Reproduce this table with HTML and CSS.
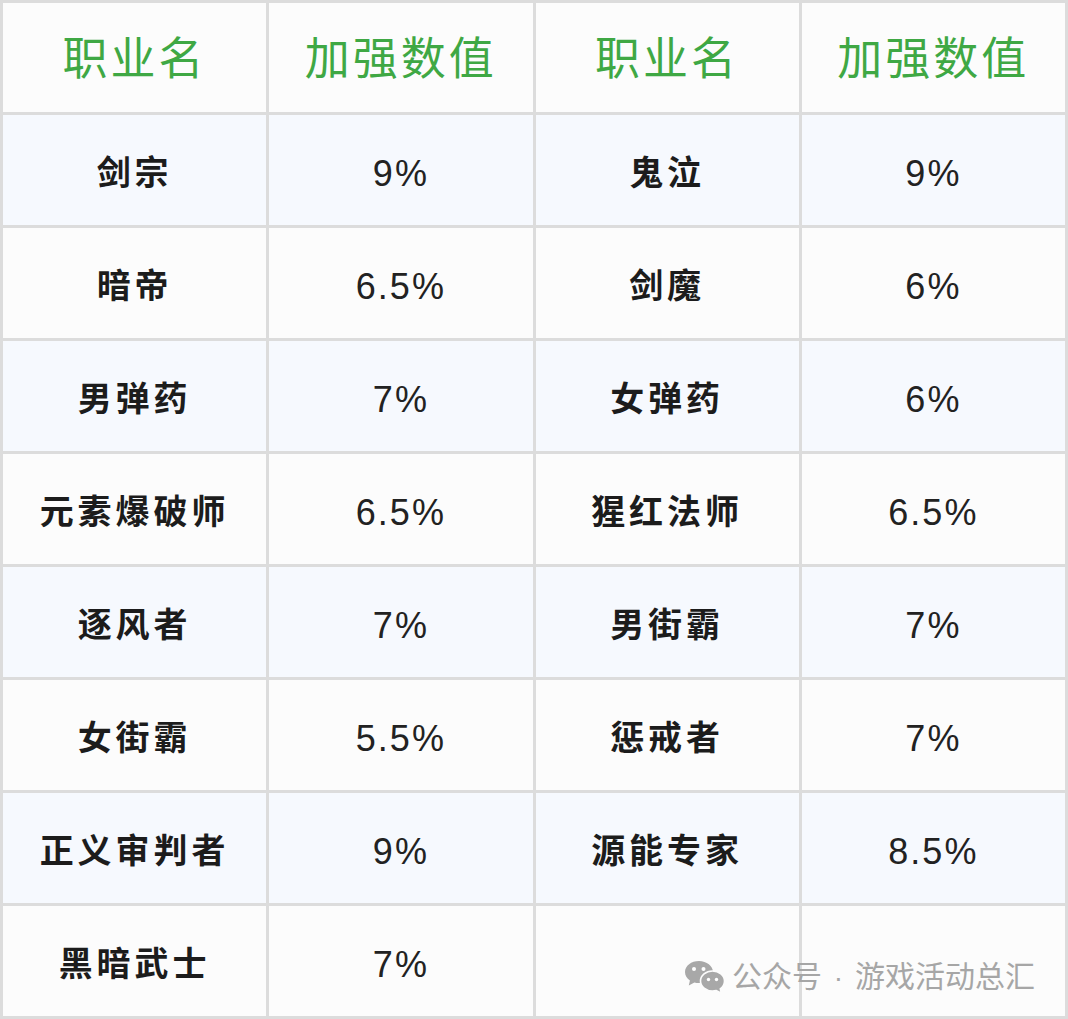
FILE: index.html
```html
<!DOCTYPE html>
<html lang="zh-CN">
<head>
<meta charset="utf-8">
<title>职业加强数值</title>
<link rel="stylesheet" href="styles.css">
</head>
<body>
<div class="page">
  <table class="buff-table">
    <thead>
      <tr class="head-row">
        <th>职业名</th><th>加强数值</th><th>职业名</th><th>加强数值</th>
      </tr>
    </thead>
    <tbody>
      <tr class="alt"><td class="name">剑宗</td><td class="val">9%</td><td class="name">鬼泣</td><td class="val">9%</td></tr>
      <tr><td class="name">暗帝</td><td class="val">6.5%</td><td class="name">剑魔</td><td class="val">6%</td></tr>
      <tr class="alt"><td class="name">男弹药</td><td class="val">7%</td><td class="name">女弹药</td><td class="val">6%</td></tr>
      <tr><td class="name">元素爆破师</td><td class="val">6.5%</td><td class="name">猩红法师</td><td class="val">6.5%</td></tr>
      <tr class="alt"><td class="name">逐风者</td><td class="val">7%</td><td class="name">男街霸</td><td class="val">7%</td></tr>
      <tr><td class="name">女街霸</td><td class="val">5.5%</td><td class="name">惩戒者</td><td class="val">7%</td></tr>
      <tr class="alt"><td class="name">正义审判者</td><td class="val">9%</td><td class="name">源能专家</td><td class="val">8.5%</td></tr>
      <tr><td class="name">黑暗武士</td><td class="val">7%</td><td class="name"></td><td class="val"></td></tr>
    </tbody>
  </table>
  <div class="watermark">
    <svg class="wm-icon" width="40" height="33" viewBox="0 0 40 33">
      <path d="M14 0C6.3 0 0 4.9 0 11c0 3.4 1.9 6.4 4.9 8.4L3.8 24.5l5.6-3c1.4.4 3 .6 4.6.6 7.7 0 14-4.9 14-11S21.7 0 14 0z" fill="#a8a8a8"/>
      <circle cx="9" cy="8" r="2" fill="#fff"/>
      <circle cx="18.5" cy="8" r="2" fill="#fff"/>
      <path d="M27.5 10C21 10 15.5 14.4 15.5 20s5.5 10 12 10c1.3 0 2.6-.2 3.8-.5l5 2.6-1-4.3c2.6-1.9 4.2-4.6 4.2-7.8 0-5.6-5.5-10-12-10z" fill="#a8a8a8" stroke="#fcfcfc" stroke-width="1.6"/>
      <circle cx="23.5" cy="18.5" r="1.7" fill="#fff"/>
      <circle cx="31.5" cy="18.5" r="1.7" fill="#fff"/>
    </svg>
    <span class="wm-text">公众号<span class="wm-dot"> · </span>游戏活动总汇</span>
  </div>
</div>
</body>
</html>
```

FILE: styles.css
```css
html, body {
  margin: 0;
  padding: 0;
  background: #fcfcfc;
}

.page {
  position: relative;
  width: 1068px;
  height: 1019px;
  overflow: hidden;
}

.buff-table {
  width: 1068px;
  height: 1019px;
  table-layout: fixed;
  border-collapse: separate;
  border-spacing: 3px;
  background: #dcdcdc;
  font-family: "Noto Sans CJK SC", "Noto Sans", sans-serif;
}

.buff-table tr {
  height: 109px;
}

.buff-table th,
.buff-table td {
  padding: 0;
  text-align: center;
  vertical-align: middle;
  background: #fcfcfc;
}

.head-row th {
  font-weight: 400;
  font-size: 45px;
  letter-spacing: 3px;
  color: #3fa844;
  padding-bottom: 4px;
}

.buff-table tbody tr.alt td {
  background: #f6f9fe;
}

.buff-table .name {
  font-weight: 700;
  font-size: 34px;
  letter-spacing: 4px;
  color: #1c1c1c;
}

.buff-table .val {
  font-family: "Liberation Sans", Arial, sans-serif;
  font-size: 36px;
  line-height: 42px;
  letter-spacing: 2px;
  color: #222;
  padding-top: 7px;
}

.watermark {
  position: absolute;
  left: 685px;
  top: 956px;
  display: flex;
  align-items: center;
  gap: 7px;
}

.wm-icon {
  display: block;
  margin-top: 3px;
}

.wm-text {
  font-family: "Noto Sans CJK SC", "Noto Sans", sans-serif;
  font-size: 30px;
  line-height: 36px;
  color: #a6a6a6;
  white-space: nowrap;
}

.wm-dot {
  font-family: "Liberation Sans", Arial, sans-serif;
  font-size: 28px;
  padding: 0 4px;
}
```
